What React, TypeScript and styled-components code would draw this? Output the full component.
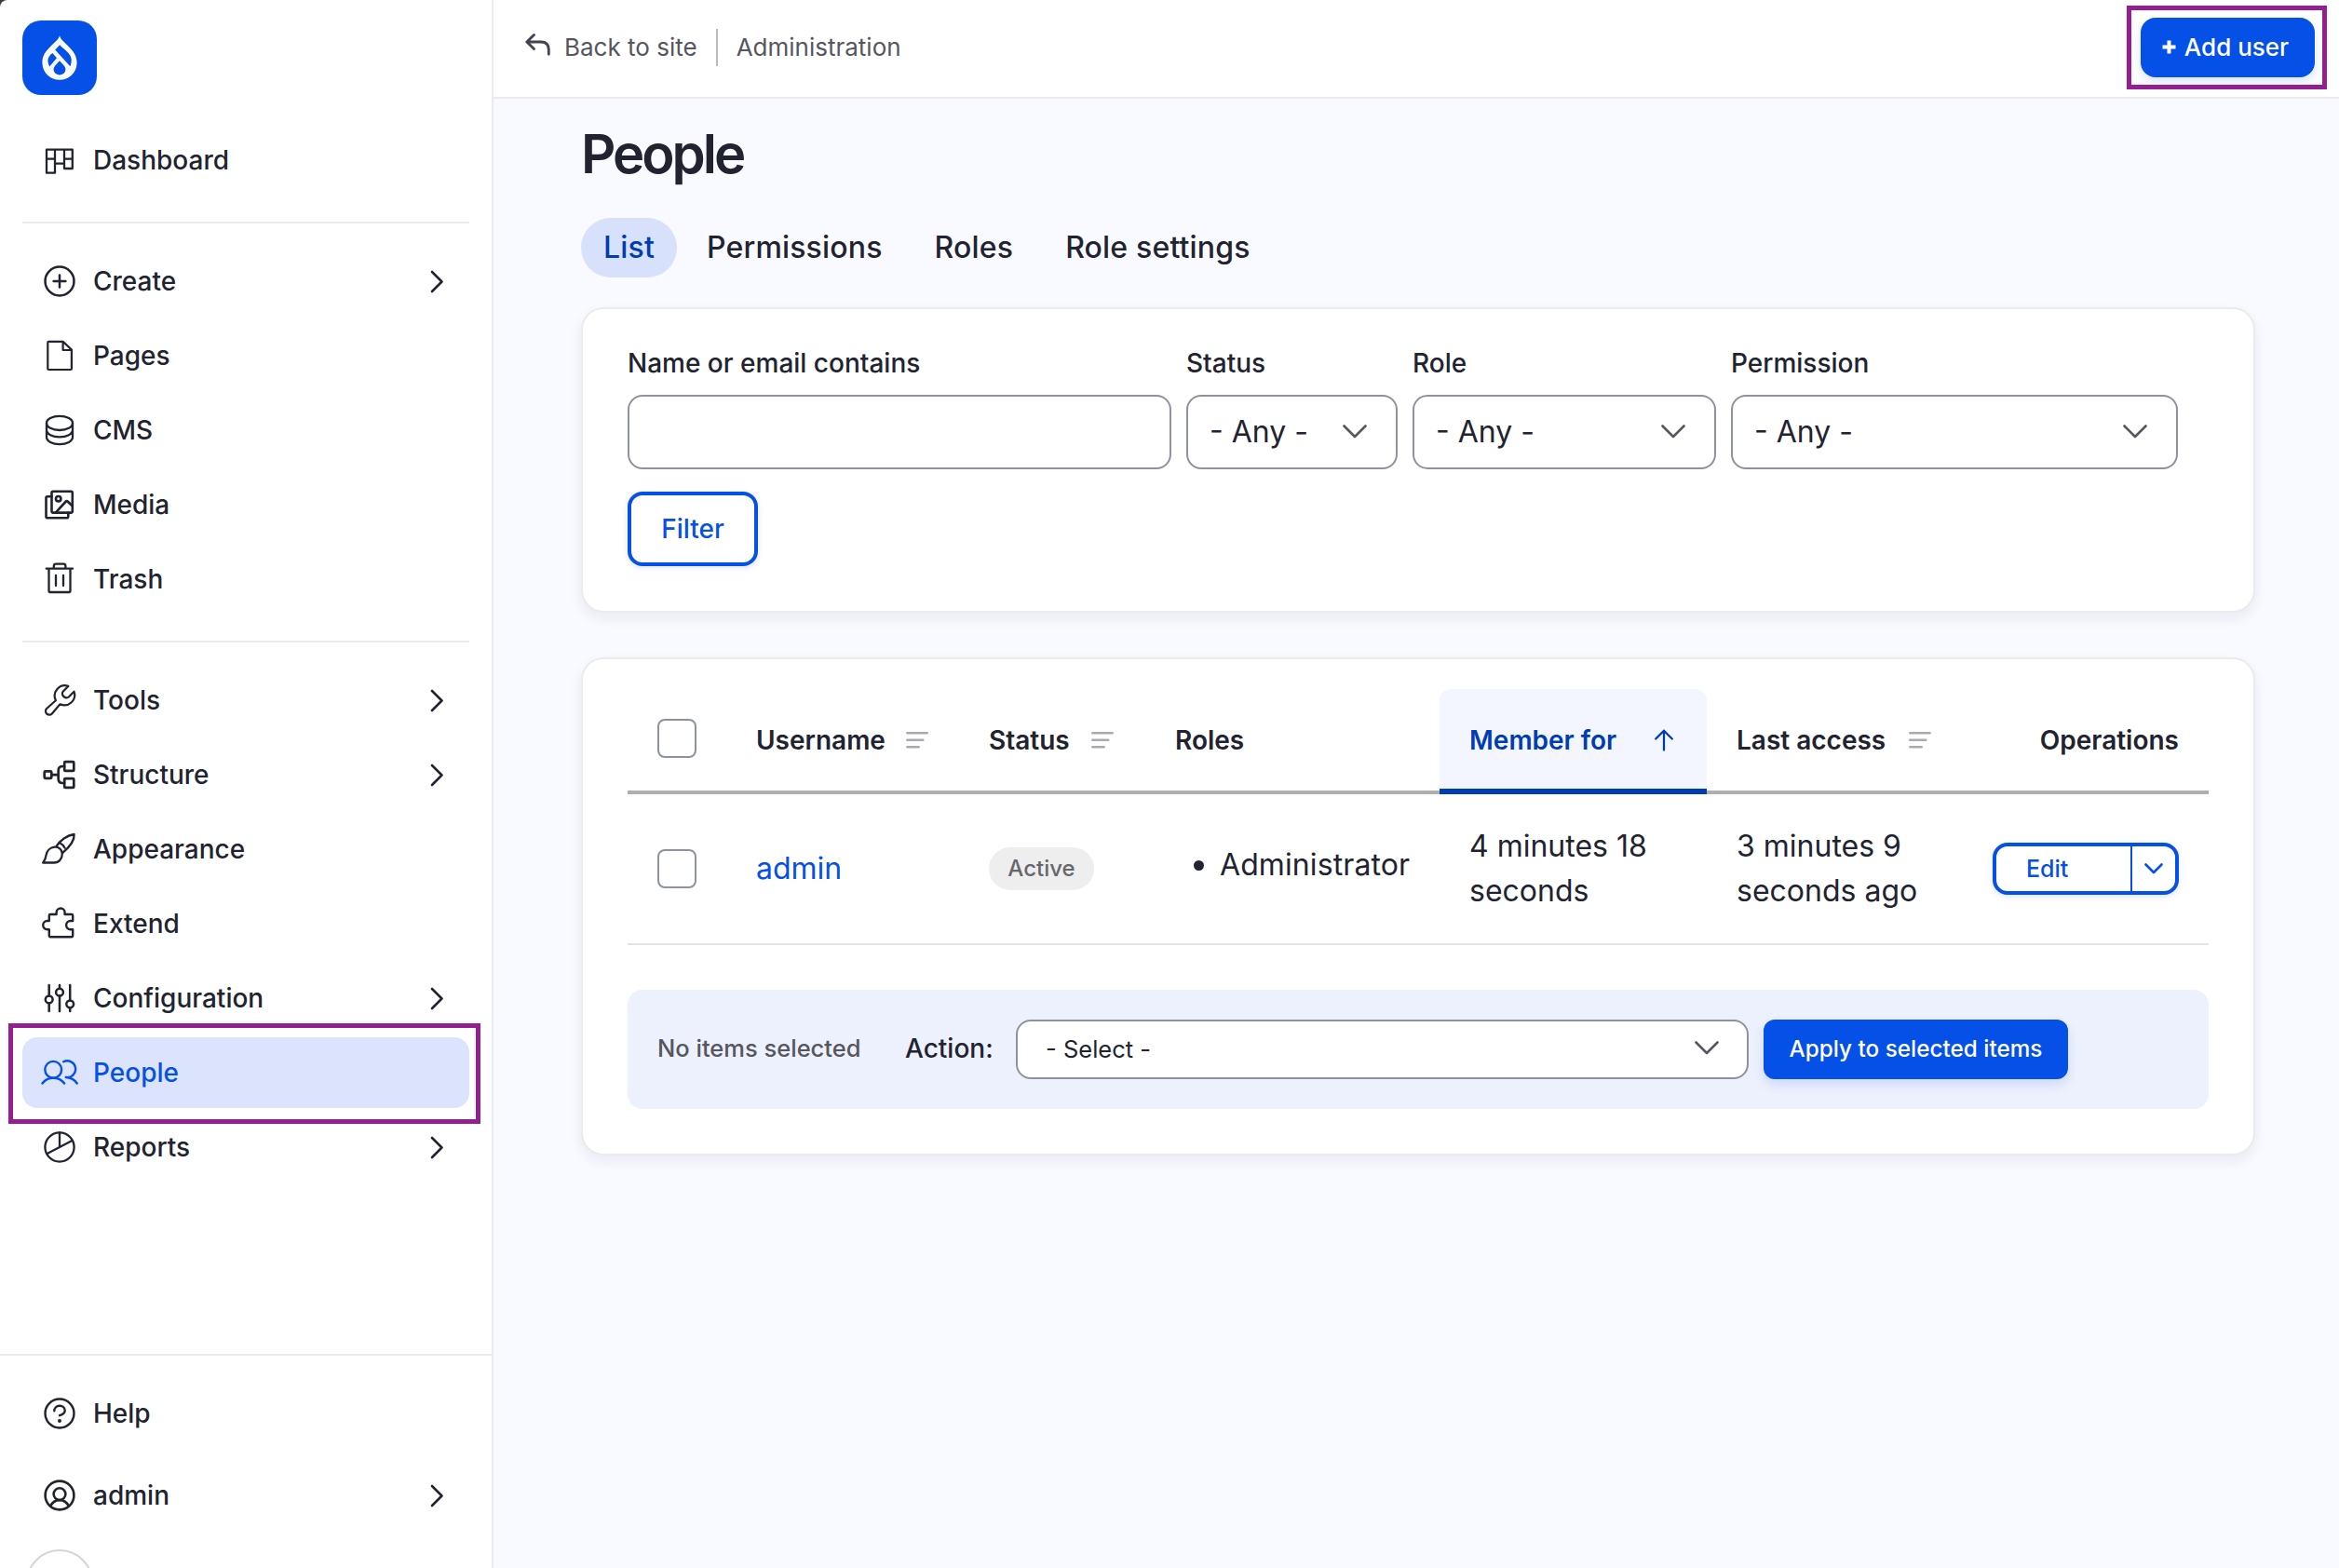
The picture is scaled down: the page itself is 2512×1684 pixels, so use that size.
import React from "react";
import styled, { createGlobalStyle, css } from "styled-components";

const color = {
  ink: "#222330",
  muted: "#55565f",
  blue: "#0550e6",
  blueDark: "#003cb3",
  line: "#ebebeb",
  field: "#8e929c",
  mark: "#931f91",
  canvas: "#f9faff",
};

const GlobalStyle = createGlobalStyle`
  * { box-sizing: border-box; }
  html, body { margin: 0; padding: 0; background: ${color.canvas}; }
  body {
    font-family: Inter, "Liberation Sans", sans-serif;
    color: ${color.ink};
    overflow: hidden;
  }
  button, input { font-family: inherit; }
`;

const Page = styled.div`
  display: flex;
  width: 2512px;
  height: 1684px;
  overflow: hidden;
`;

const SidebarBackdrop = styled.div`
  flex: none;
  width: 530px;
  background: #3b3a45;
`;

const Sidebar = styled.aside`
  display: flex;
  flex-direction: column;
  height: 1684px;
  background: #fff;
  border-right: 2px solid ${color.line};
  border-top-left-radius: 8px;
  overflow: hidden;
`;

const Logo = styled.a`
  display: block;
  flex: none;
  width: 80px;
  height: 80px;
  margin: 22px 0 0 24px;
  border-radius: 20px;
  background: ${color.blue};
`;

const NavGroup = styled.nav<{ $rule?: boolean }>`
  display: flex;
  flex: none;
  flex-direction: column;
  gap: 4px;
  margin: 0 24px;
  padding: 24px 0 28px;
  ${(p) => p.$rule && css`border-bottom: 2px solid ${color.line};`}
`;

const TopGroup = styled(NavGroup)`
  margin-top: 8px;
`;

const NavItem = styled.a<{ $active?: boolean }>`
  position: relative;
  display: flex;
  flex: none;
  align-items: center;
  gap: 16px;
  height: 76px;
  padding: 0 24px 0 20px;
  border-radius: 16px;
  font-size: 28px;
  font-weight: 540;
  line-height: 40px;
  color: ${(p) => (p.$active ? color.blue : color.ink)};
  background: ${(p) => (p.$active ? "#dce4fd" : "transparent")};
`;

const NavLabel = styled.span`
  flex: 1;
`;

const Footer = styled.div`
  display: flex;
  flex: none;
  flex-direction: column;
  gap: 12px;
  margin-top: auto;
  height: 230px;
  padding: 24px 24px 0;
  border-top: 2px solid ${color.line};
`;

const CollapseButton = styled.button`
  flex: none;
  width: 72px;
  height: 72px;
  margin: 8px 0 0 4px;
  border: 2px solid #d4d4d4;
  border-radius: 50%;
  background: #fff;
`;

const Highlight = styled.span<{ $t: number; $r: number; $b: number; $l: number }>`
  position: absolute;
  top: ${(p) => -p.$t}px;
  right: ${(p) => -p.$r}px;
  bottom: ${(p) => -p.$b}px;
  left: ${(p) => -p.$l}px;
  border: 5px solid ${color.mark};
  pointer-events: none;
`;

const Main = styled.main`
  flex: 1;
  display: flex;
  flex-direction: column;
  min-width: 0;
`;

const TopBar = styled.header`
  display: flex;
  align-items: center;
  justify-content: space-between;
  height: 106px;
  padding: 0 26px 2px 34px;
  background: #fff;
  border-bottom: 2px solid ${color.line};
`;

const Crumbs = styled.div`
  display: flex;
  align-items: center;
  font-size: 26px;
  line-height: 40px;
  color: ${color.muted};
`;

const BackLink = styled.a`
  display: flex;
  align-items: center;
  gap: 12px;
  height: 40px;
  padding-right: 20px;
  margin-right: 20px;
  border-right: 2px solid #b8b9c1;
`;

const PrimaryButton = styled.button<{ $w: number; $size: number }>`
  position: relative;
  display: flex;
  flex: none;
  align-items: center;
  justify-content: center;
  gap: 9px;
  width: ${(p) => p.$w}px;
  height: 64px;
  padding: ${(p) => (p.$size > 25 ? "0 5px 1px 0" : "0 0 2px")};
  border: 0;
  border-radius: ${(p) => (p.$size > 25 ? 16 : 12)}px;
  background: ${color.blue};
  color: #fff;
  font-size: ${(p) => p.$size}px;
  font-weight: 500;
  white-space: nowrap;
  box-shadow: 0 6px 12px rgba(5, 80, 230, 0.14);
`;

const Content = styled.div`
  padding: 24px 90px 0 94px;
`;

const Title = styled.h1`
  margin: 0 0 34px;
  font-size: 58px;
  line-height: 70px;
  font-weight: 600;
  letter-spacing: -3px;
`;

const Tabs = styled.div`
  display: flex;
  gap: 8px;
  margin-bottom: 32px;
`;

const Tab = styled.a<{ $active?: boolean }>`
  height: 64px;
  padding: 0 24px;
  border-radius: 32px;
  font-size: 32px;
  line-height: 64px;
  font-weight: 500;
  letter-spacing: 0.17px;
  color: ${(p) => (p.$active ? color.blueDark : color.ink)};
  background: ${(p) => (p.$active ? "#d7e1fc" : "transparent")};
`;

const Card = styled.section`
  width: 1798px;
  border: 2px solid ${color.line};
  border-radius: 24px;
  background: #fff;
  box-shadow: 0 6px 14px rgba(34, 35, 80, 0.07);
`;

const FilterCard = styled(Card)`
  height: 328px;
  margin-bottom: 48px;
  padding: 36px 48px 48px;
`;

const TableCard = styled(Card)`
  padding: 32px 48px 48px;
`;

const Fields = styled.div`
  display: flex;
  gap: 16px;
  margin-bottom: 24px;
`;

const Field = styled.label<{ $w: number }>`
  display: flex;
  flex-direction: column;
  gap: 12px;
  width: ${(p) => p.$w}px;
  font-size: 28px;
  line-height: 44px;
  font-weight: 500;
`;

const TextInput = styled.input`
  width: 100%;
  height: 80px;
  border: 2px solid ${color.field};
  border-radius: 16px;
  background: #fff;
  outline: 0;
`;

const SelectBox = styled.div<{ $compact?: boolean }>`
  display: flex;
  flex: none;
  align-items: center;
  justify-content: space-between;
  width: ${(p) => (p.$compact ? "787px" : "100%")};
  height: ${(p) => (p.$compact ? 64 : 80)}px;
  padding: ${(p) => (p.$compact ? "0 30px 2px 30px" : "0 31px 0 23px")};
  border: 2px solid ${color.field};
  border-radius: 16px;
  background: #fff;
  font-size: ${(p) => (p.$compact ? 25.5 : 32)}px;
  font-weight: 400;
  color: ${color.ink};
`;

const OutlineButton = styled.button`
  width: 140px;
  height: 80px;
  padding: 0;
  border: 4px solid ${color.blue};
  border-radius: 16px;
  background: #fff;
  color: ${color.blue};
  font-size: 28px;
  font-weight: 500;
  box-shadow: 0 2px 6px rgba(5, 80, 230, 0.14);
`;

const Table = styled.table`
  width: 1698px;
  table-layout: fixed;
  border-collapse: separate;
  border-spacing: 0;
  margin-bottom: 48px;
`;

const Th = styled.th<{ $w: number; $active?: boolean; $end?: boolean }>`
  width: ${(p) => p.$w}px;
  height: 113px;
  padding: 0 32px;
  text-align: ${(p) => (p.$end ? "right" : "left")};
  font-size: 28px;
  font-weight: 600;
  white-space: nowrap;
  border-bottom: 4px solid #aeb0af;
  ${(p) =>
    p.$active &&
    css`
      color: ${color.blueDark};
      background: #f3f6fe;
      border-bottom-color: ${color.blueDark};
      border-radius: 12px 12px 0 0;
      box-shadow: inset 0 -2px 0 ${color.blueDark};
    `}
`;

const HeadLabel = styled.span<{ $gap?: number }>`
  display: flex;
  align-items: center;
  gap: ${(p) => p.$gap ?? 22}px;
`;

const Td = styled.td`
  height: 162px;
  padding: 0 32px;
  font-size: 32px;
  line-height: 48px;
  border-bottom: 2px solid #e4e4e6;
`;

const Checkbox = styled.span<{ $raised?: boolean }>`
  display: block;
  width: 42px;
  height: 42px;
  margin-bottom: ${(p) => (p.$raised ? 4 : 0)}px;
  border: 2px solid ${color.field};
  border-radius: 8px;
  background: #fff;
`;

const UserLink = styled.a`
  color: ${color.blue};
`;

const Badge = styled.span`
  display: block;
  width: 113px;
  height: 46px;
  border-radius: 23px;
  background: #eee;
  color: #66676c;
  text-align: center;
  font-size: 24px;
  line-height: 45px;
  font-weight: 500;
`;

const RoleList = styled.ul`
  display: flex;
  margin: 0;
  padding: 0 0 8px 20px;
  list-style: none;
`;

const RoleItem = styled.li`
  display: flex;
  align-items: center;
  gap: 17px;
  letter-spacing: 0.1px;
  &::before {
    content: "";
    width: 11px;
    height: 11px;
    border-radius: 50%;
    background: ${color.ink};
  }
`;

const SplitButton = styled.div`
  display: flex;
  width: 200px;
  height: 56px;
  margin-left: auto;
  border: 4px solid ${color.blue};
  border-radius: 16px;
  background: #fff;
  color: ${color.blue};
  font-size: 25px;
  line-height: 48px;
  font-weight: 500;
  box-shadow: 0 2px 6px rgba(5, 80, 230, 0.14);
`;

const SplitMain = styled.span`
  flex: 1;
  padding-left: 32px;
  border-right: 2px solid ${color.blue};
`;

const SplitToggle = styled.span`
  display: flex;
  align-items: center;
  justify-content: center;
  width: 46px;
`;

const ActionBar = styled.div`
  display: flex;
  align-items: center;
  height: 128px;
  padding: 0 32px;
  border-radius: 16px;
  background: #edf1fd;
`;

const SelectionNote = styled.span`
  width: 266px;
  padding-bottom: 3px;
  font-size: 25.5px;
  font-weight: 500;
  color: ${color.muted};
`;

const ActionLabel = styled.span`
  width: 119px;
  padding-bottom: 3px;
  font-size: 28px;
  font-weight: 500;
`;

const ActionSelect = styled.div`
  flex: none;
  margin-right: 16px;
`;

const Glyph = ({ children, w = 2.5 }: { children: React.ReactNode; w?: number }) => (
  <svg width="40" height="40" viewBox="0 0 40 40" fill="none" stroke="currentColor" strokeWidth={w} strokeLinecap="round" strokeLinejoin="round">
    {children}
  </svg>
);

const glyphs: Record<string, React.ReactNode> = {
  dashboard: (
    <Glyph w={2.3}>
      <path d="M6 8.7h27.8V29H25V8.7M6 8.7v25h9v-25M6 18.7h9M25 18.7h8.8M15 23.7h10" />
    </Glyph>
  ),
  create: (
    <Glyph>
      <circle cx="20" cy="20" r="15.5" />
      <path d="M20 13.6v12.8M13.6 20h12.8" />
    </Glyph>
  ),
  pages: (
    <Glyph w={2.2}>
      <path d="M8.300 4.800h15.300l9.300 8.800V34q0 1-1 1H8.300q-1 0-1-1V5.800q0-1 1-1M23.600 4.800v9.200h9.200" />
    </Glyph>
  ),
  cms: (
    <Glyph w={2.3}>
      <ellipse cx="20" cy="12.400" rx="14" ry="7.600" />
      <path d="M6 12.400v15.200c0 4.200 6.300 7.600 14 7.600s14-3.400 14-7.600V12.400M6 19.800c0 4.200 6.300 7.600 14 7.600s14-3.400 14-7.600" />
    </Glyph>
  ),
  media: (
    <Glyph w={2.6}>
      <rect x="11.500" y="5.800" width="22.300" height="22.800" rx="1.500" />
      <path d="M11.500 11.200H7q-1.500 0-1.500 1.500v20q0 1.500 1.500 1.500h20.500q1.800 0 1.800-1.800v-3.800M16 28.300 26.800 16.500q.9-.9 1.800 0l5 4.800" />
      <circle cx="18.700" cy="13.700" r="2.700" />
    </Glyph>
  ),
  trash: (
    <Glyph w={2.3}>
      <path d="M5.700 8.700h28.400M13.800 8.700V6q0-2.300 2.300-2.300h8q2.300 0 2.300 2.300v2.700M8.500 8.700V33q0 1 1 1h21q1 0 1-1V8.700M16 16v11M24 16v11" />
    </Glyph>
  ),
  tools: (
    <Glyph w={2.2}>
      <path d="M29.300 4.900A11 11 0 0 0 15.900 20.200L6.100 29a3.950 3.950 0 1 0 5.700 5.500L20.500 24.300A11 11 0 0 0 35.500 10.700L29.800 16.500q-1.500 1.300-3.600.6-2.800-1-3.200-3.500-.3-1.800.8-3z" />
    </Glyph>
  ),
  structure: (
    <Glyph w={2.7}>
      <rect x="3.700" y="16.400" width="7.600" height="7.400" rx="1" />
      <rect x="25.200" y="6.200" width="10.100" height="9.700" rx="1" />
      <rect x="25.200" y="24.200" width="10.100" height="9.700" rx="1" />
      <path d="M11.300 20.100h7.300M25 11h-1.800q-4.500 0-4.500 4.500v9q0 4.500 4.500 4.500H25" />
    </Glyph>
  ),
  appearance: (
    <Glyph w={2.3}>
      <path d="M2.200 34.500H14c5.200 0 9-4.400 8.800-9.600 0-4.700-4.200-7.500-8-7.200-5 .4-8.600 4-9.300 9-.4 3.200-1.300 5.300-3.300 7.800zM16.200 17.300C20.500 10.700 28 5 35.600 4c.7 7-5.200 13.800-12.200 19.800M20.500 13.500q3.200 1.500 5 5" />
    </Glyph>
  ),
  extend: (
    <Glyph w={2.4}>
      <path d="M8.800 17v-5.800q0-1.200 1.200-1.200h6.600V8a4.500 4.500 0 0 1 9 0v2H33q1.200 0 1.200 1.200V17h-2.500a4.600 4.600 0 0 0 0 9.200h2.500V33q0 1.200-1.200 1.200H10q-1.200 0-1.200-1.200v-6.800h-2a4.600 4.600 0 0 1 0-9.200z" />
    </Glyph>
  ),
  configuration: (
    <Glyph>
      <path d="M8.700 6v11.500M8.700 25.300V34M20 6v3.800M20 17.600V34M31.200 6v16.400M31.200 30.200V34" />
      <circle cx="8.700" cy="21.400" r="3.900" />
      <circle cx="20" cy="13.700" r="3.900" />
      <circle cx="31.200" cy="26.300" r="3.900" />
    </Glyph>
  ),
  people: (
    <Glyph w={2.4}>
      <circle cx="13.200" cy="16.800" r="8.900" />
      <path d="M1.500 31.500c3-3.900 7-5.700 11.700-5.700s8.900 1.800 11.900 5.700M24.200 8.300a8.900 8.900 0 1 1 2.500 16.700c5.200.3 9.200 2.300 12 6.500" />
    </Glyph>
  ),
  reports: (
    <Glyph w={2.3}>
      <circle cx="20" cy="20" r="15.600" />
      <path d="M20 4.400V20M6.600 27 33.400 13" />
    </Glyph>
  ),
  help: (
    <Glyph w={2.4}>
      <circle cx="20" cy="20" r="15.500" />
      <path d="M14.300 17.200c0-3.200 2.500-5.500 5.700-5.500s5.700 2.200 5.700 5.200c0 2.800-2.200 4.100-5.700 5.300" />
      <circle cx="20" cy="28" r="1.100" fill="currentColor" strokeWidth="1.800" />
    </Glyph>
  ),
  account: (
    <Glyph w={2.6}>
      <circle cx="20" cy="20" r="15.400" />
      <circle cx="20" cy="18.600" r="6.400" />
      <path d="M10.200 31.500c2-4.200 5.500-6.400 9.800-6.400s7.800 2.200 9.800 6.400" />
    </Glyph>
  ),
};

const ChevronRight = () => (
  <svg width="25" height="25" viewBox="0 0 25 25" fill="none" stroke="currentColor" strokeWidth="2.6" strokeLinecap="round" strokeLinejoin="round">
    <path d="M9 2l10.500 10.500L9 23" />
  </svg>
);

const ChevronDown = ({ w = 26, tone = color.muted }: { w?: number; tone?: string }) => (
  <svg width={w} height={w * 0.58} viewBox={`0 0 ${w} ${w * 0.58}`} fill="none" stroke={tone} strokeWidth="2.6" strokeLinecap="round" strokeLinejoin="round">
    <path d={`M1.500 1.500 L${w / 2} ${w / 2} L${w - 1.5} 1.500`} />
  </svg>
);

const SortIcon = () => (
  <svg width="24" height="20" viewBox="0 0 24 20" fill="none" stroke="#a9aab0" strokeWidth="2.5" strokeLinecap="round">
    <path d="M1.300 2.300h21.400M1.300 9.800h17M1.300 17.300h12.400" />
  </svg>
);

const ArrowUp = () => (
  <svg width="22" height="24" viewBox="0 0 22 24" fill="none" stroke={color.blueDark} strokeWidth="2.3" strokeLinecap="round" strokeLinejoin="round">
    <path d="M11 22.500V1.700M2.200 10.500 11 1.700l8.800 8.800" />
  </svg>
);

const BackIcon = () => (
  <svg width="30" height="40" viewBox="0 0 30 40" fill="none" stroke="#43444f" strokeWidth="2.8" strokeLinecap="round" strokeLinejoin="round">
    <path d="M9.500 6.400 1.800 14l7.700 7.600M2 14h15q8.300 0 8.300 8.300v5" />
  </svg>
);

const PlusIcon = () => (
  <svg width="15" height="15" viewBox="0 0 15 15" stroke="#fff" strokeWidth="4">
    <path d="M7.500 .5v14M.5 7.500h14" />
  </svg>
);

const DropMark = () => (
  <svg width="80" height="80" viewBox="0 0 80 80">
    <path fill="#fafbff" d="M40 16.300C42 24.300 58.600 30.500 58.600 45.300a18.600 18.500 0 0 1-37.200 0C21.400 30.500 38 24.300 40 16.300Z" />
    <g fill={color.blue}>
      <path d="M40.200 26.300 35.200 31.400 51.400 49.300C54.300 42 52.500 37.500 47.500 33 44.500 30.300 42.200 28.800 40.200 26.300Z" />
      <path d="M32.400 35 37 40.300 29.200 49.500C26.300 43.500 26.700 39.300 32.400 35Z" />
      <path d="M40 43.200 45 48.700A6.500 6.500 0 0 1 46.400 52.400a6.400 6.100 0 0 1-12.800 0A6.500 6.500 0 0 1 35 48.700Z" />
    </g>
  </svg>
);

type Item = { label: string; icon: string; more?: boolean; active?: boolean };

const contentItems: Item[] = [
  { label: "Create", icon: "create", more: true },
  { label: "Pages", icon: "pages" },
  { label: "CMS", icon: "cms" },
  { label: "Media", icon: "media" },
  { label: "Trash", icon: "trash" },
];

const adminItems: Item[] = [
  { label: "Tools", icon: "tools", more: true },
  { label: "Structure", icon: "structure", more: true },
  { label: "Appearance", icon: "appearance" },
  { label: "Extend", icon: "extend" },
  { label: "Configuration", icon: "configuration", more: true },
  { label: "People", icon: "people", active: true },
  { label: "Reports", icon: "reports", more: true },
];

const NavLink = ({ label, icon, more, active }: Item) => (
  <NavItem $active={active}>
    {glyphs[icon]}
    <NavLabel>{label}</NavLabel>
    {more && <ChevronRight />}
    {active && <Highlight $t={15} $r={12} $b={17} $l={15} />}
  </NavItem>
);

const filters = [
  { label: "Status", width: 227 },
  { label: "Role", width: 326 },
  { label: "Permission", width: 480 },
];

export default function App() {
  return (
    <>
      <GlobalStyle />
      <Page>
        <SidebarBackdrop>
          <Sidebar>
            <Logo>
              <DropMark />
            </Logo>
            <TopGroup $rule>
              <NavLink label="Dashboard" icon="dashboard" />
            </TopGroup>
            <NavGroup $rule>
              {contentItems.map((item) => (
                <NavLink key={item.label} {...item} />
              ))}
            </NavGroup>
            <NavGroup>
              {adminItems.map((item) => (
                <NavLink key={item.label} {...item} />
              ))}
            </NavGroup>
            <Footer>
              <NavLink label="Help" icon="help" />
              <NavLink label="admin" icon="account" more />
              <CollapseButton />
            </Footer>
          </Sidebar>
        </SidebarBackdrop>
        <Main>
          <TopBar>
            <Crumbs>
              <BackLink>
                <BackIcon />
                Back to site
              </BackLink>
              Administration
            </Crumbs>
            <PrimaryButton $w={187} $size={26}>
              <PlusIcon />
              Add user
              <Highlight $t={13} $r={13} $b={13} $l={15} />
            </PrimaryButton>
          </TopBar>
          <Content>
            <Title>People</Title>
            <Tabs>
              <Tab $active>List</Tab>
              <Tab>Permissions</Tab>
              <Tab>Roles</Tab>
              <Tab>Role settings</Tab>
            </Tabs>
            <FilterCard>
              <Fields>
                <Field $w={584}>
                  Name or email contains
                  <TextInput />
                </Field>
                {filters.map((f) => (
                  <Field key={f.label} $w={f.width}>
                    {f.label}
                    <SelectBox>
                      - Any -
                      <ChevronDown />
                    </SelectBox>
                  </Field>
                ))}
              </Fields>
              <OutlineButton>Filter</OutlineButton>
            </FilterCard>
            <TableCard>
              <Table>
                <thead>
                  <tr>
                    <Th $w={106}>
                      <Checkbox $raised />
                    </Th>
                    <Th $w={250}>
                      <HeadLabel>
                        Username
                        <SortIcon />
                      </HeadLabel>
                    </Th>
                    <Th $w={200}>
                      <HeadLabel $gap={23}>
                        Status
                        <SortIcon />
                      </HeadLabel>
                    </Th>
                    <Th $w={316}>Roles</Th>
                    <Th $w={287} $active>
                      <HeadLabel $gap={40}>
                        Member for
                        <ArrowUp />
                      </HeadLabel>
                    </Th>
                    <Th $w={275}>
                      <HeadLabel $gap={25}>
                        Last access
                        <SortIcon />
                      </HeadLabel>
                    </Th>
                    <Th $w={264} $end>
                      Operations
                    </Th>
                  </tr>
                </thead>
                <tbody>
                  <tr>
                    <Td>
                      <Checkbox />
                    </Td>
                    <Td>
                      <UserLink>admin</UserLink>
                    </Td>
                    <Td>
                      <Badge>Active</Badge>
                    </Td>
                    <Td>
                      <RoleList>
                        <RoleItem>Administrator</RoleItem>
                      </RoleList>
                    </Td>
                    <Td>4 minutes 18 seconds</Td>
                    <Td>3 minutes 9 seconds ago</Td>
                    <Td>
                      <SplitButton>
                        <SplitMain>Edit</SplitMain>
                        <SplitToggle>
                          <ChevronDown w={20} tone={color.blue} />
                        </SplitToggle>
                      </SplitButton>
                    </Td>
                  </tr>
                </tbody>
              </Table>
              <ActionBar>
                <SelectionNote>No items selected</SelectionNote>
                <ActionLabel>Action:</ActionLabel>
                <ActionSelect>
                  <SelectBox $compact>
                    - Select -
                    <ChevronDown />
                  </SelectBox>
                </ActionSelect>
                <PrimaryButton $w={327} $size={24.3}>
                  Apply to selected items
                </PrimaryButton>
              </ActionBar>
            </TableCard>
          </Content>
        </Main>
      </Page>
    </>
  );
}
